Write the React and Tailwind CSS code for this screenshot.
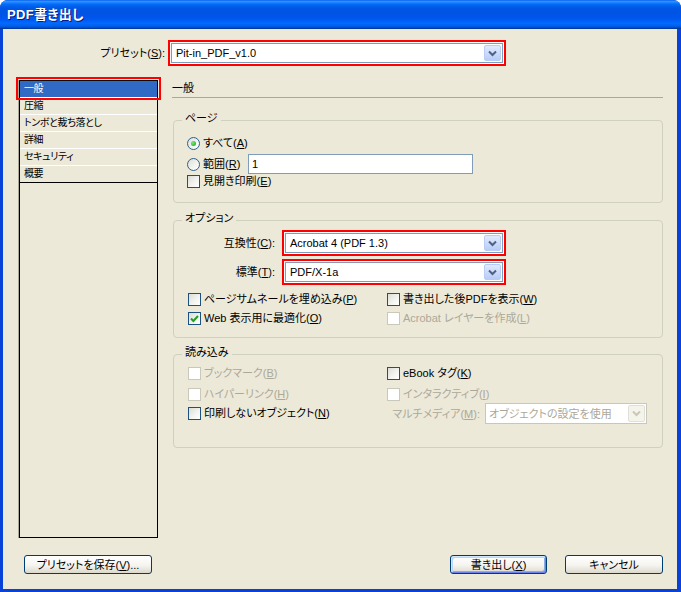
import React from "react";

function Chevron({ color = "#4D6185" }) {
  return (
    <svg width="9" height="7" viewBox="0 0 9 7">
      <polyline points="1,1.5 4.5,5 8,1.5" fill="none" stroke={color} strokeWidth="2" />
    </svg>
  );
}

function Combo({ value, width }) {
  return (
    <div className="border-2 border-[#FF0000] bg-white p-px h-[26px] shrink-0" style={{ width }}>
      <div className="h-full border border-[#7F9DB9] bg-white flex items-center">
        <span className="flex-1 pl-[4px] text-[11px] leading-[14px] text-black whitespace-nowrap">{value}</span>
        <span className="w-[17px] h-[16px] mr-px rounded-[2px] border border-[#B9CCF5] bg-[linear-gradient(to_bottom,#E1EAFE,#B8CCF8)] flex items-center justify-center">
          <Chevron />
        </span>
      </div>
    </div>
  );
}

function Check({ checked, disabled }) {
  return (
    <span
      className={
        disabled
          ? "w-[13px] h-[13px] shrink-0 border border-[#CAC8BB] bg-white"
          : "w-[13px] h-[13px] shrink-0 border border-[#1C5180] bg-[linear-gradient(135deg,#DCDCD7_0%,#F4F4F1_60%,#FFFFFF_100%)] flex items-center justify-center"
      }
    >
      {checked && (
        <svg width="9" height="9" viewBox="0 0 9 9">
          <polyline points="1,4.5 3.4,7 8,2" fill="none" stroke="#21A121" strokeWidth="2" />
        </svg>
      )}
    </span>
  );
}

function Radio({ checked }) {
  return (
    <span className="w-[13px] h-[13px] shrink-0 rounded-full border border-[#2C628B] bg-[linear-gradient(135deg,#DCDCD7_0%,#F4F4F1_60%,#FFFFFF_100%)] flex items-center justify-center">
      {checked && <span className="w-[5px] h-[5px] rounded-full bg-[radial-gradient(circle_at_35%_35%,#7BE77A,#12A413)]" />}
    </span>
  );
}

function CheckRow({ checked, disabled, children }) {
  return (
    <div className="flex items-center h-[14px] gap-[3px]">
      <Check checked={checked} disabled={disabled} />
      <span className={disabled ? "text-[11px] leading-[14px] text-[#ACA899] whitespace-nowrap" : "text-[11px] leading-[14px] text-black whitespace-nowrap"}>
        {children}
      </span>
    </div>
  );
}

function Group({ label, className, children }) {
  return (
    <div className={"relative ml-px border border-[#D0D0BF] rounded-[4px] " + className}>
      <span className="absolute -top-[10px] left-[8px] px-[3px] bg-[#ECE9D8] text-[11px] leading-[14px] text-black">{label}</span>
      {children}
    </div>
  );
}

function XPButton({ children, width, isDefault }) {
  return (
    <button
      className={
        isDefault
          ? "h-[19px] border border-[#003C74] rounded-[3px] bg-[linear-gradient(to_bottom,#FFFFFF,#F5F4EF_55%,#DCD8CC)] shadow-[inset_1px_1px_0_#CEE7FF,inset_-1px_-1px_0_#6982EE,inset_2px_2px_0_#BCD4F6,inset_-2px_-2px_0_#89ADE4] text-[11px] leading-[14px] text-black flex items-center justify-center"
          : "h-[19px] border border-[#003C74] rounded-[3px] bg-[linear-gradient(to_bottom,#FFFFFF,#F5F4EF_55%,#DCD8CC)] text-[11px] leading-[14px] text-black flex items-center justify-center"
      }
      style={{ width }}
    >
      {children}
    </button>
  );
}

export default function App() {
  const items = ["圧縮", "トンボと裁ち落とし", "詳細", "セキュリティ", "概要"];
  return (
    <div className="w-[681px] h-[592px] bg-white font-['Liberation_Sans','Noto_Sans_CJK_JP',sans-serif] [font-feature-settings:'palt']">
      <div className="w-full h-full flex flex-col rounded-t-[8px] overflow-hidden bg-[#0842D8]">
        {/* Title bar */}
        <div className="h-[29px] shrink-0 flex items-center pl-[7px] bg-[linear-gradient(to_bottom,#0058EE_0%,#3593FF_4%,#288EFF_7%,#127DFF_10%,#036FFC_14%,#0262EE_20%,#0057E5_28%,#0054E3_40%,#0055EB_60%,#005BF5_70%,#026AFE_80%,#0062EF_88%,#0052D6_94%,#0040AB_97%,#003092_100%)]">
          <span className="text-white font-bold text-[13px] leading-[15px] tracking-[0.3px] [text-shadow:1px_1px_0_#0A1883]">PDF書き出し</span>
        </div>
        {/* Body */}
        <div className="flex-1 flex flex-col ml-[3px] mr-[4px] mb-[3px] bg-[#ECE9D8] pl-[13px] pr-[14px] text-black">
          {/* Preset row */}
          <div className="mt-[11px] flex items-center gap-[3px] h-[26px]">
            <span className="w-[149px] text-right text-[11px] leading-[14px]">
              プリセット(<u>S</u>):
            </span>
            <Combo value="Pit-in_PDF_v1.0" width={338} />
          </div>

          {/* Main */}
          <div className="mt-[11px] flex gap-[12px] h-[461px]">
            {/* Left list */}
            <div className="w-[144px] shrink-0 pt-[3px] pl-[3px]">
              <div className="relative w-[139px] h-[458px] border border-black bg-[#ECE9D8] shadow-[-1px_0_0_#ACA899]">
                <div className="h-[17px] border-b border-white bg-[#316AC5] text-white text-[10px] leading-[16px] tracking-[-0.4px] pl-[4px]">一般</div>
                {items.map((t, i) => (
                  <div
                    key={t}
                    className={
                      i === items.length - 1
                        ? "h-[17px] border-b border-black text-[10px] leading-[16px] tracking-[-0.4px] pl-[4px]"
                        : "h-[17px] border-b border-white text-[10px] leading-[16px] tracking-[-0.4px] pl-[4px]"
                    }
                  >
                    {t}
                  </div>
                ))}
                <div className="absolute -left-[4px] -top-[4px] w-[145px] h-[23px] border-2 border-[#FF0000]" />
              </div>
            </div>

            {/* Right panel */}
            <div className="flex-1 flex flex-col">
              <div className="h-[21px] pt-[4px] border-b border-[#ACA899] text-[11px] leading-[14px]">一般</div>

              {/* ページ */}
              <Group label="ページ" className="mt-[22px] pl-[13px] pt-[15px] pb-[14px]">
                <div className="flex items-center h-[14px] gap-[3px]">
                  <Radio checked />
                  <span className="text-[11px] leading-[14px]">すべて(<u>A</u>)</span>
                </div>
                <div className="mt-[4px] flex items-center h-[20px] gap-[3px]">
                  <Radio />
                  <span className="text-[11px] leading-[14px] w-[42px]">範囲(<u>R</u>)</span>
                  <div className="w-[225px] h-[20px] border border-[#7F9DB9] bg-white flex items-center pl-[3px] text-[11px] leading-[14px]">1</div>
                </div>
                <CheckRow>見開き印刷(<u>E</u>)</CheckRow>
              </Group>

              {/* オプション */}
              <Group label="オプション" className="mt-[17px] pt-[9px] pb-[12px]">
                <div className="flex items-center gap-[7px]">
                  <span className="w-[101px] text-right text-[11px] leading-[14px]">互換性(<u>C</u>):</span>
                  <Combo value="Acrobat 4 (PDF 1.3)" width={224} />
                </div>
                <div className="mt-[3px] flex items-center gap-[7px]">
                  <span className="w-[101px] text-right text-[11px] leading-[14px]">標準(<u>T</u>):</span>
                  <Combo value="PDF/X-1a" width={224} />
                </div>
                <div className="mt-[7px] pl-[14px] grid grid-cols-[199px_1fr] gap-y-[5px]">
                  <CheckRow>ページサムネールを埋め込み(<u>P</u>)</CheckRow>
                  <CheckRow>書き出した後PDFを表示(<u>W</u>)</CheckRow>
                  <CheckRow checked>Web 表示用に最適化(<u>O</u>)</CheckRow>
                  <CheckRow disabled>Acrobat レイヤーを作成(<u>L</u>)</CheckRow>
                </div>
              </Group>

              {/* 読み込み */}
              <Group label="読み込み" className="mt-[16px] pt-[11px] pb-[23px]">
                <div className="pl-[14px] grid grid-cols-[199px_1fr] items-start">
                  <CheckRow disabled>ブックマーク(<u>B</u>)</CheckRow>
                  <CheckRow>eBook タグ(<u>K</u>)</CheckRow>
                  <div className="mt-[7px]">
                    <CheckRow disabled>ハイパーリンク(<u>H</u>)</CheckRow>
                  </div>
                  <div className="mt-[7px]">
                    <CheckRow disabled>インタラクティブ(<u>I</u>)</CheckRow>
                  </div>
                  <div className="mt-[5px]">
                    <CheckRow>印刷しないオブジェクト(<u>N</u>)</CheckRow>
                  </div>
                  <div className="mt-[2px] flex items-center gap-[5px]">
                    <span className="w-[93px] text-right text-[11px] leading-[14px] text-[#ACA899] whitespace-nowrap">マルチメディア(<u>M</u>):</span>
                    <div className="w-[162px] h-[21px] border border-[#C9C7BA] bg-white flex items-center">
                      <span className="flex-1 pl-[3px] text-[11px] leading-[14px] text-[#ACA899] whitespace-nowrap">オブジェクトの設定を使用</span>
                      <span className="w-[17px] h-[17px] mr-px rounded-[2px] border border-[#E0DFD9] bg-[#F5F4EA] flex items-center justify-center">
                        <Chevron color="#C9C7BA" />
                      </span>
                    </div>
                  </div>
                </div>
              </Group>
            </div>
          </div>

          {/* Buttons */}
          <div className="mt-[17px] flex items-center">
            <div className="ml-[8px]">
              <XPButton width={128}>プリセットを保存(<u>V</u>)...</XPButton>
            </div>
            <div className="flex-1" />
            <XPButton width={97} isDefault>書き出し(<u>X</u>)</XPButton>
            <div className="w-[18px]" />
            <XPButton width={98}>キャンセル</XPButton>
          </div>
        </div>
      </div>
    </div>
  );
}
